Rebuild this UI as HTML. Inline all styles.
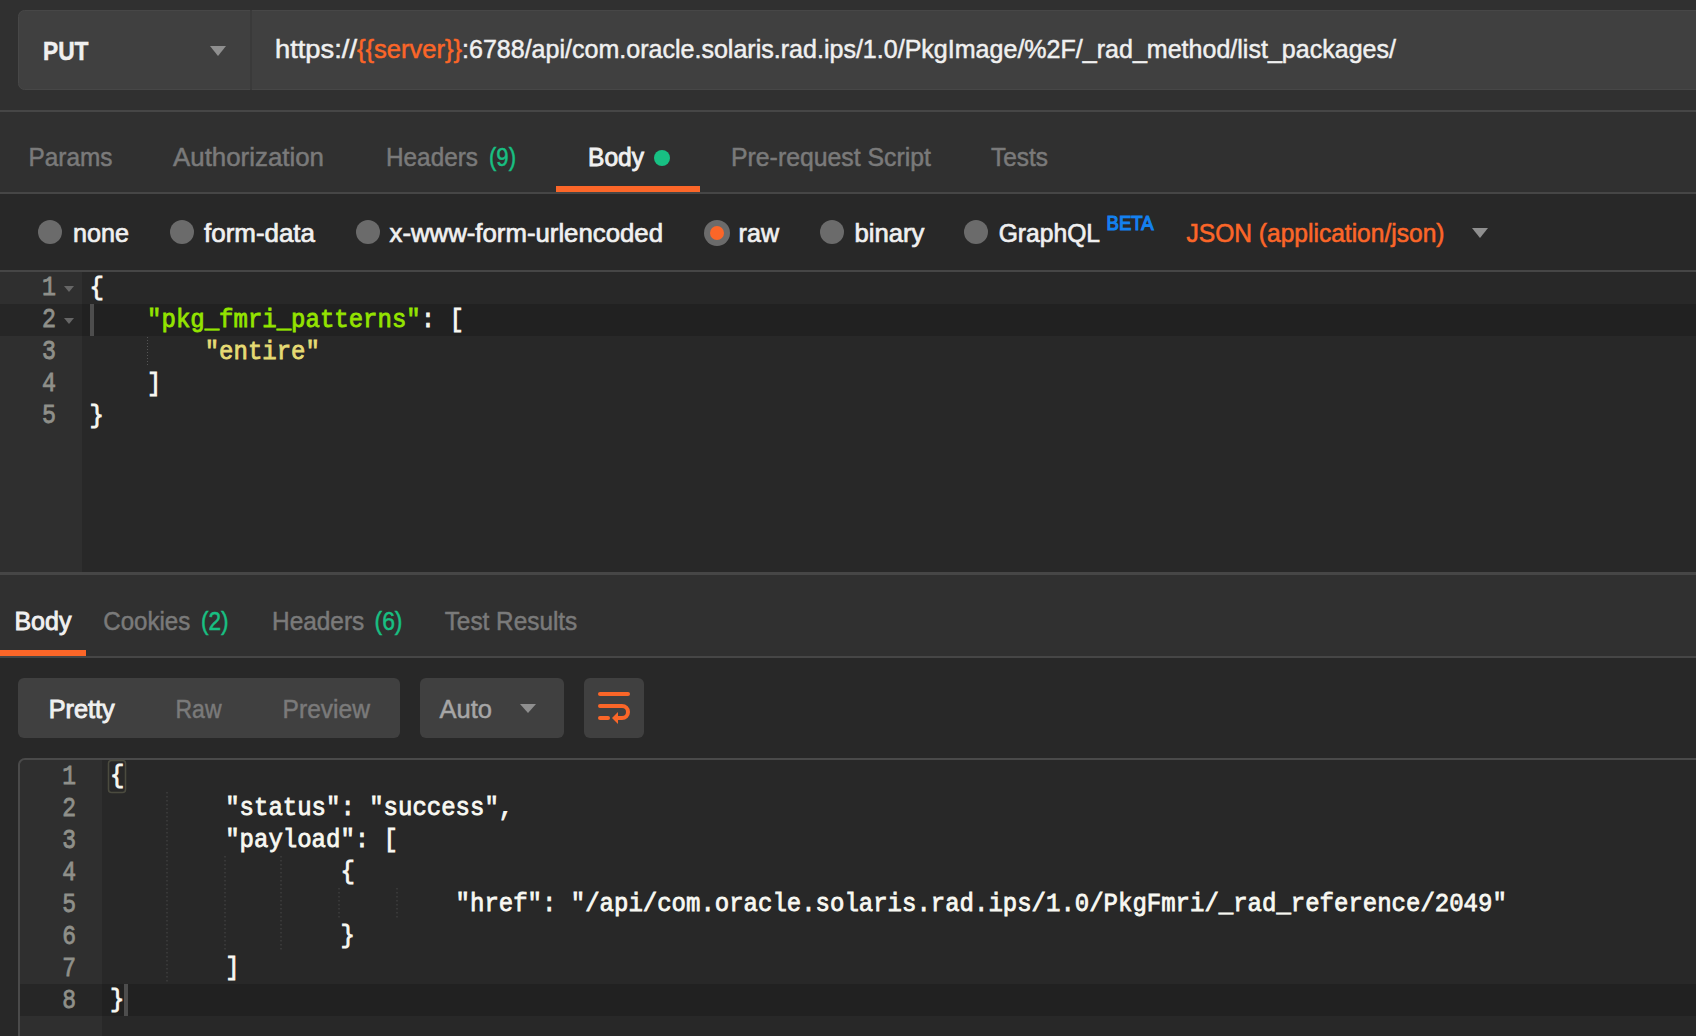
<!DOCTYPE html>
<html><head><meta charset="utf-8"><title>Postman</title>
<style>html,body{margin:0;padding:0;background:#303030;overflow:hidden;width:1696px;height:1036px}svg{display:block}</style>
</head><body>
<svg width="1696" height="1036" viewBox="0 0 1696 1036"><rect x="0" y="0" width="1696" height="110" rx="0" fill="#303030" />
<rect x="18.5" y="10.5" width="1696" height="79" rx="6" fill="#404040" stroke="#474747" stroke-width="1"/>
<rect x="250" y="10" width="2" height="80" rx="0" fill="#3a3a3a" />
<text x="43" y="60" font-size="26" fill="#f0f0f0" font-weight="bold" font-family='"Liberation Sans", sans-serif' textLength="45.5" lengthAdjust="spacingAndGlyphs" stroke="#f0f0f0" stroke-width="0.5" >PUT</text>
<path d="M210 46 L226 46 L218 56 Z" fill="#8f8f8f"/>
<text x="275" y="58" font-size="26" fill="#f0f0f0" font-weight="normal" font-family='"Liberation Sans", sans-serif' textLength="82" lengthAdjust="spacingAndGlyphs" stroke="#f0f0f0" stroke-width="0.5" >https://</text>
<text x="357" y="58" font-size="26" fill="#fb6628" font-weight="normal" font-family='"Liberation Sans", sans-serif' textLength="105" lengthAdjust="spacingAndGlyphs" stroke="#fb6628" stroke-width="0.5" >{{server}}</text>
<text x="462" y="58" font-size="26" fill="#f0f0f0" font-weight="normal" font-family='"Liberation Sans", sans-serif' textLength="934" lengthAdjust="spacingAndGlyphs" stroke="#f0f0f0" stroke-width="0.5" >:6788/api/com.oracle.solaris.rad.ips/1.0/PkgImage/%2F/_rad_method/list_packages/</text>
<rect x="0" y="110" width="1696" height="2" rx="0" fill="#464646" />
<rect x="0" y="112" width="1696" height="80" rx="0" fill="#303030" />
<text x="28.5" y="166" font-size="26" fill="#7a7a7a" font-weight="normal" font-family='"Liberation Sans", sans-serif' textLength="84" lengthAdjust="spacingAndGlyphs" stroke="#7a7a7a" stroke-width="0.5" >Params</text>
<text x="173" y="166" font-size="26" fill="#7a7a7a" font-weight="normal" font-family='"Liberation Sans", sans-serif' textLength="151" lengthAdjust="spacingAndGlyphs" stroke="#7a7a7a" stroke-width="0.5" >Authorization</text>
<text x="386" y="166" font-size="26" fill="#7a7a7a" font-weight="normal" font-family='"Liberation Sans", sans-serif' textLength="92" lengthAdjust="spacingAndGlyphs" stroke="#7a7a7a" stroke-width="0.5" >Headers</text>
<text x="489" y="166" font-size="26" fill="#18c083" font-weight="normal" font-family='"Liberation Sans", sans-serif' textLength="27" lengthAdjust="spacingAndGlyphs" stroke="#18c083" stroke-width="0.5" >(9)</text>
<text x="588" y="166" font-size="26" fill="#f0f0f0" font-weight="normal" font-family='"Liberation Sans", sans-serif' textLength="56" lengthAdjust="spacingAndGlyphs" stroke="#f0f0f0" stroke-width="0.9" >Body</text>
<circle cx="662" cy="158" r="8" fill="#18c083"/>
<text x="731" y="166" font-size="26" fill="#7a7a7a" font-weight="normal" font-family='"Liberation Sans", sans-serif' textLength="200" lengthAdjust="spacingAndGlyphs" stroke="#7a7a7a" stroke-width="0.5" >Pre-request Script</text>
<text x="991" y="166" font-size="26" fill="#7a7a7a" font-weight="normal" font-family='"Liberation Sans", sans-serif' textLength="57" lengthAdjust="spacingAndGlyphs" stroke="#7a7a7a" stroke-width="0.5" >Tests</text>
<rect x="556" y="186" width="144" height="6" rx="0" fill="#fb6628" />
<rect x="0" y="192" width="1696" height="2" rx="0" fill="#464646" />
<rect x="0" y="194" width="1696" height="77" rx="0" fill="#282828" />
<circle cx="50" cy="232" r="12" fill="#6b6b6b"/>
<text x="73" y="241.5" font-size="26" fill="#f0f0f0" font-weight="normal" font-family='"Liberation Sans", sans-serif' textLength="56" lengthAdjust="spacingAndGlyphs" stroke="#f0f0f0" stroke-width="0.7" >none</text>
<circle cx="182" cy="232" r="12" fill="#6b6b6b"/>
<text x="204" y="241.5" font-size="26" fill="#f0f0f0" font-weight="normal" font-family='"Liberation Sans", sans-serif' textLength="111" lengthAdjust="spacingAndGlyphs" stroke="#f0f0f0" stroke-width="0.7" >form-data</text>
<circle cx="368" cy="232" r="12" fill="#6b6b6b"/>
<text x="389.5" y="241.5" font-size="26" fill="#f0f0f0" font-weight="normal" font-family='"Liberation Sans", sans-serif' textLength="273.5" lengthAdjust="spacingAndGlyphs" stroke="#f0f0f0" stroke-width="0.7" >x-www-form-urlencoded</text>
<circle cx="717" cy="233" r="13" fill="#6b6b6b"/>
<text x="738.6" y="241.5" font-size="26" fill="#f0f0f0" font-weight="normal" font-family='"Liberation Sans", sans-serif' textLength="40.39999999999998" lengthAdjust="spacingAndGlyphs" stroke="#f0f0f0" stroke-width="0.7" >raw</text>
<circle cx="832" cy="232" r="12" fill="#6b6b6b"/>
<text x="854.5" y="241.5" font-size="26" fill="#f0f0f0" font-weight="normal" font-family='"Liberation Sans", sans-serif' textLength="69.89999999999998" lengthAdjust="spacingAndGlyphs" stroke="#f0f0f0" stroke-width="0.7" >binary</text>
<circle cx="976" cy="232" r="12" fill="#6b6b6b"/>
<text x="998.7" y="241.5" font-size="26" fill="#f0f0f0" font-weight="normal" font-family='"Liberation Sans", sans-serif' textLength="101.29999999999995" lengthAdjust="spacingAndGlyphs" stroke="#f0f0f0" stroke-width="0.7" >GraphQL</text>
<circle cx="717" cy="233" r="7" fill="#fb6628"/>
<text x="1106.6" y="230" font-size="21" fill="#1481f0" font-weight="normal" font-family='"Liberation Sans", sans-serif' textLength="47" lengthAdjust="spacingAndGlyphs" stroke="#1481f0" stroke-width="1.2" >BETA</text>
<text x="1186.5" y="242" font-size="26" fill="#fb6628" font-weight="normal" font-family='"Liberation Sans", sans-serif' textLength="258" lengthAdjust="spacingAndGlyphs" stroke="#fb6628" stroke-width="0.6" >JSON (application/json)</text>
<path d="M1472 228 L1488 228 L1480 238 Z" fill="#8f8f8f"/>
<rect x="0" y="270" width="1696" height="2" rx="0" fill="#464646" />
<rect x="0" y="272" width="1696" height="300" rx="0" fill="#282828" />
<rect x="0" y="272" width="82" height="300" rx="0" fill="#2f2f2f" />
<rect x="0" y="304" width="1696" height="32" rx="0" fill="#212121" />
<rect x="0" y="304" width="82" height="32" rx="0" fill="#262626" />
<rect x="0" y="572" width="1696" height="4" rx="0" fill="#464646" />
<text x="42" y="295.3" font-size="27" fill="#8f908a" font-weight="normal" font-family='"Liberation Mono", monospace' textLength="14" lengthAdjust="spacingAndGlyphs" stroke="#8f908a" stroke-width="0.8" >1</text>
<text x="42" y="327.3" font-size="27" fill="#8f908a" font-weight="normal" font-family='"Liberation Mono", monospace' textLength="14" lengthAdjust="spacingAndGlyphs" stroke="#8f908a" stroke-width="0.8" >2</text>
<text x="42" y="359.3" font-size="27" fill="#8f908a" font-weight="normal" font-family='"Liberation Mono", monospace' textLength="14" lengthAdjust="spacingAndGlyphs" stroke="#8f908a" stroke-width="0.8" >3</text>
<text x="42" y="391.3" font-size="27" fill="#8f908a" font-weight="normal" font-family='"Liberation Mono", monospace' textLength="14" lengthAdjust="spacingAndGlyphs" stroke="#8f908a" stroke-width="0.8" >4</text>
<text x="42" y="423.3" font-size="27" fill="#8f908a" font-weight="normal" font-family='"Liberation Mono", monospace' textLength="14" lengthAdjust="spacingAndGlyphs" stroke="#8f908a" stroke-width="0.8" >5</text>
<path d="M64 286 L74 286 L69 292 Z" fill="#666"/>
<path d="M64 318 L74 318 L69 324 Z" fill="#666"/>
<text x="89.5" y="294.5" font-size="25" fill="#f8f8f2" font-weight="normal" font-family='"Liberation Mono", monospace' textLength="14.4" lengthAdjust="spacingAndGlyphs" stroke="#f8f8f2" stroke-width="0.8" xml:space="preserve">{</text>
<text x="147.1" y="326.5" font-size="25" fill="#94e400" font-weight="normal" font-family='"Liberation Mono", monospace' textLength="273.6" lengthAdjust="spacingAndGlyphs" stroke="#94e400" stroke-width="0.8" xml:space="preserve">&quot;pkg_fmri_patterns&quot;</text>
<text x="420.7" y="326.5" font-size="25" fill="#f8f8f2" font-weight="normal" font-family='"Liberation Mono", monospace' textLength="43.2" lengthAdjust="spacingAndGlyphs" stroke="#f8f8f2" stroke-width="0.8" xml:space="preserve">: [</text>
<text x="204.7" y="358.5" font-size="25" fill="#e6db74" font-weight="normal" font-family='"Liberation Mono", monospace' textLength="115.2" lengthAdjust="spacingAndGlyphs" stroke="#e6db74" stroke-width="0.8" xml:space="preserve">&quot;entire&quot;</text>
<text x="147.1" y="390.5" font-size="25" fill="#f8f8f2" font-weight="normal" font-family='"Liberation Mono", monospace' textLength="14.4" lengthAdjust="spacingAndGlyphs" stroke="#f8f8f2" stroke-width="0.8" xml:space="preserve">]</text>
<text x="89.5" y="422.5" font-size="25" fill="#f8f8f2" font-weight="normal" font-family='"Liberation Mono", monospace' textLength="14.4" lengthAdjust="spacingAndGlyphs" stroke="#f8f8f2" stroke-width="0.8" xml:space="preserve">}</text>
<rect x="90" y="304" width="4" height="32" rx="0" fill="#4d4d4d" />
<line x1="147.5" y1="337" x2="147.5" y2="366" stroke="#555" stroke-dasharray="1,2"/>
<rect x="0" y="575" width="1696" height="75" rx="0" fill="#303030" />
<text x="14.4" y="630.4" font-size="26" fill="#f0f0f0" font-weight="normal" font-family='"Liberation Sans", sans-serif' textLength="57" lengthAdjust="spacingAndGlyphs" stroke="#f0f0f0" stroke-width="0.9" >Body</text>
<text x="103.3" y="630.4" font-size="26" fill="#7a7a7a" font-weight="normal" font-family='"Liberation Sans", sans-serif' textLength="87" lengthAdjust="spacingAndGlyphs" stroke="#7a7a7a" stroke-width="0.5" >Cookies</text>
<text x="201" y="630.4" font-size="26" fill="#18c083" font-weight="normal" font-family='"Liberation Sans", sans-serif' textLength="27.6" lengthAdjust="spacingAndGlyphs" stroke="#18c083" stroke-width="0.5" >(2)</text>
<text x="272" y="630.4" font-size="26" fill="#7a7a7a" font-weight="normal" font-family='"Liberation Sans", sans-serif' textLength="92.3" lengthAdjust="spacingAndGlyphs" stroke="#7a7a7a" stroke-width="0.5" >Headers</text>
<text x="374.5" y="630.4" font-size="26" fill="#18c083" font-weight="normal" font-family='"Liberation Sans", sans-serif' textLength="28" lengthAdjust="spacingAndGlyphs" stroke="#18c083" stroke-width="0.5" >(6)</text>
<text x="444.7" y="630.4" font-size="26" fill="#7a7a7a" font-weight="normal" font-family='"Liberation Sans", sans-serif' textLength="132.6" lengthAdjust="spacingAndGlyphs" stroke="#7a7a7a" stroke-width="0.5" >Test Results</text>
<rect x="0" y="650" width="86" height="6" rx="0" fill="#fb6628" />
<rect x="0" y="656" width="1696" height="2" rx="0" fill="#464646" />
<rect x="0" y="658" width="1696" height="378" rx="0" fill="#282828" />
<rect x="18" y="678" width="382" height="60" rx="6" fill="#404040" />
<text x="48.7" y="718.3" font-size="26" fill="#f0f0f0" font-weight="normal" font-family='"Liberation Sans", sans-serif' textLength="66" lengthAdjust="spacingAndGlyphs" stroke="#f0f0f0" stroke-width="0.9" >Pretty</text>
<text x="175.5" y="718.3" font-size="26" fill="#7a7a7a" font-weight="normal" font-family='"Liberation Sans", sans-serif' textLength="46" lengthAdjust="spacingAndGlyphs" stroke="#7a7a7a" stroke-width="0.5" >Raw</text>
<text x="282.6" y="718.3" font-size="26" fill="#7a7a7a" font-weight="normal" font-family='"Liberation Sans", sans-serif' textLength="87.3" lengthAdjust="spacingAndGlyphs" stroke="#7a7a7a" stroke-width="0.5" >Preview</text>
<rect x="420" y="678" width="144" height="60" rx="6" fill="#404040" />
<text x="439.5" y="718.3" font-size="26" fill="#a6a6a6" font-weight="normal" font-family='"Liberation Sans", sans-serif' textLength="52.5" lengthAdjust="spacingAndGlyphs" stroke="#a6a6a6" stroke-width="0.5" >Auto</text>
<path d="M520 704 L536 704 L528 713 Z" fill="#8f8f8f"/>
<rect x="584" y="678" width="60" height="60" rx="6" fill="#404040" />
<g fill="none" stroke="#fb6628" stroke-width="4" stroke-linecap="round"><path d="M600 694 H628"/><path d="M600 706 H622 A6 6 0 0 1 622 718 H617"/><path d="M600 718 H608"/></g>
<path d="M612 718 L618 712 L618 724 Z" fill="#fb6628"/>
<path d="M20 765 A5 5 0 0 1 25 760 H1696 V1036 H20 Z" fill="#282828"/>
<path d="M20 765 A5 5 0 0 1 25 760 H102 V1036 H20 Z" fill="#2f2f2f"/>
<rect x="20" y="984" width="1696" height="32" rx="0" fill="#212121" />
<rect x="20" y="984" width="82" height="32" rx="0" fill="#262626" />
<path d="M19 1041 V765 A6 6 0 0 1 25 759 H1701" fill="none" stroke="#4a4a4a" stroke-width="2"/>
<text x="62.3" y="784.2" font-size="27" fill="#8f908a" font-weight="normal" font-family='"Liberation Mono", monospace' textLength="13.8" lengthAdjust="spacingAndGlyphs" stroke="#8f908a" stroke-width="0.8" >1</text>
<text x="62.3" y="816.2" font-size="27" fill="#8f908a" font-weight="normal" font-family='"Liberation Mono", monospace' textLength="13.8" lengthAdjust="spacingAndGlyphs" stroke="#8f908a" stroke-width="0.8" >2</text>
<text x="62.3" y="848.2" font-size="27" fill="#8f908a" font-weight="normal" font-family='"Liberation Mono", monospace' textLength="13.8" lengthAdjust="spacingAndGlyphs" stroke="#8f908a" stroke-width="0.8" >3</text>
<text x="62.3" y="880.2" font-size="27" fill="#8f908a" font-weight="normal" font-family='"Liberation Mono", monospace' textLength="13.8" lengthAdjust="spacingAndGlyphs" stroke="#8f908a" stroke-width="0.8" >4</text>
<text x="62.3" y="912.2" font-size="27" fill="#8f908a" font-weight="normal" font-family='"Liberation Mono", monospace' textLength="13.8" lengthAdjust="spacingAndGlyphs" stroke="#8f908a" stroke-width="0.8" >5</text>
<text x="62.3" y="944.2" font-size="27" fill="#8f908a" font-weight="normal" font-family='"Liberation Mono", monospace' textLength="13.8" lengthAdjust="spacingAndGlyphs" stroke="#8f908a" stroke-width="0.8" >6</text>
<text x="62.3" y="976.2" font-size="27" fill="#8f908a" font-weight="normal" font-family='"Liberation Mono", monospace' textLength="13.8" lengthAdjust="spacingAndGlyphs" stroke="#8f908a" stroke-width="0.8" >7</text>
<text x="62.3" y="1008.2" font-size="27" fill="#8f908a" font-weight="normal" font-family='"Liberation Mono", monospace' textLength="13.8" lengthAdjust="spacingAndGlyphs" stroke="#8f908a" stroke-width="0.8" >8</text>
<text x="110.0" y="783.1" font-size="25" fill="#f8f8f2" font-weight="normal" font-family='"Liberation Mono", monospace' textLength="14.4" lengthAdjust="spacingAndGlyphs" stroke="#f8f8f2" stroke-width="0.8" xml:space="preserve">{</text>
<text x="225.2" y="815.1" font-size="25" fill="#f8f8f2" font-weight="normal" font-family='"Liberation Mono", monospace' textLength="288.0" lengthAdjust="spacingAndGlyphs" stroke="#f8f8f2" stroke-width="0.8" xml:space="preserve">&quot;status&quot;: &quot;success&quot;,</text>
<text x="225.2" y="847.1" font-size="25" fill="#f8f8f2" font-weight="normal" font-family='"Liberation Mono", monospace' textLength="172.8" lengthAdjust="spacingAndGlyphs" stroke="#f8f8f2" stroke-width="0.8" xml:space="preserve">&quot;payload&quot;: [</text>
<text x="340.4" y="879.1" font-size="25" fill="#f8f8f2" font-weight="normal" font-family='"Liberation Mono", monospace' textLength="14.4" lengthAdjust="spacingAndGlyphs" stroke="#f8f8f2" stroke-width="0.8" xml:space="preserve">{</text>
<text x="455.6" y="911.1" font-size="25" fill="#f8f8f2" font-weight="normal" font-family='"Liberation Mono", monospace' textLength="1051.2" lengthAdjust="spacingAndGlyphs" stroke="#f8f8f2" stroke-width="0.8" xml:space="preserve">&quot;href&quot;: &quot;/api/com.oracle.solaris.rad.ips/1.0/PkgFmri/_rad_reference/2049&quot;</text>
<text x="340.4" y="943.1" font-size="25" fill="#f8f8f2" font-weight="normal" font-family='"Liberation Mono", monospace' textLength="14.4" lengthAdjust="spacingAndGlyphs" stroke="#f8f8f2" stroke-width="0.8" xml:space="preserve">}</text>
<text x="225.2" y="975.1" font-size="25" fill="#f8f8f2" font-weight="normal" font-family='"Liberation Mono", monospace' textLength="14.4" lengthAdjust="spacingAndGlyphs" stroke="#f8f8f2" stroke-width="0.8" xml:space="preserve">]</text>
<text x="110.0" y="1007.1" font-size="25" fill="#f8f8f2" font-weight="normal" font-family='"Liberation Mono", monospace' textLength="14.4" lengthAdjust="spacingAndGlyphs" stroke="#f8f8f2" stroke-width="0.8" xml:space="preserve">}</text>
<rect x="108.5" y="760.5" width="17" height="32" rx="3" fill="none" stroke="#4b4b3f" stroke-width="1.5"/>
<rect x="124" y="984" width="4" height="32" rx="0" fill="#4d4d4d" />
<line x1="167" y1="792" x2="167" y2="982" stroke="#444" stroke-width="1.2" stroke-dasharray="1.5,2.5"/>
<line x1="225" y1="856" x2="225" y2="950" stroke="#444" stroke-width="1.2" stroke-dasharray="1.5,2.5"/>
<line x1="281" y1="856" x2="281" y2="950" stroke="#444" stroke-width="1.2" stroke-dasharray="1.5,2.5"/>
<line x1="339" y1="888" x2="339" y2="918" stroke="#444" stroke-width="1.2" stroke-dasharray="1.5,2.5"/>
<line x1="397" y1="888" x2="397" y2="918" stroke="#444" stroke-width="1.2" stroke-dasharray="1.5,2.5"/></svg>
</body></html>
